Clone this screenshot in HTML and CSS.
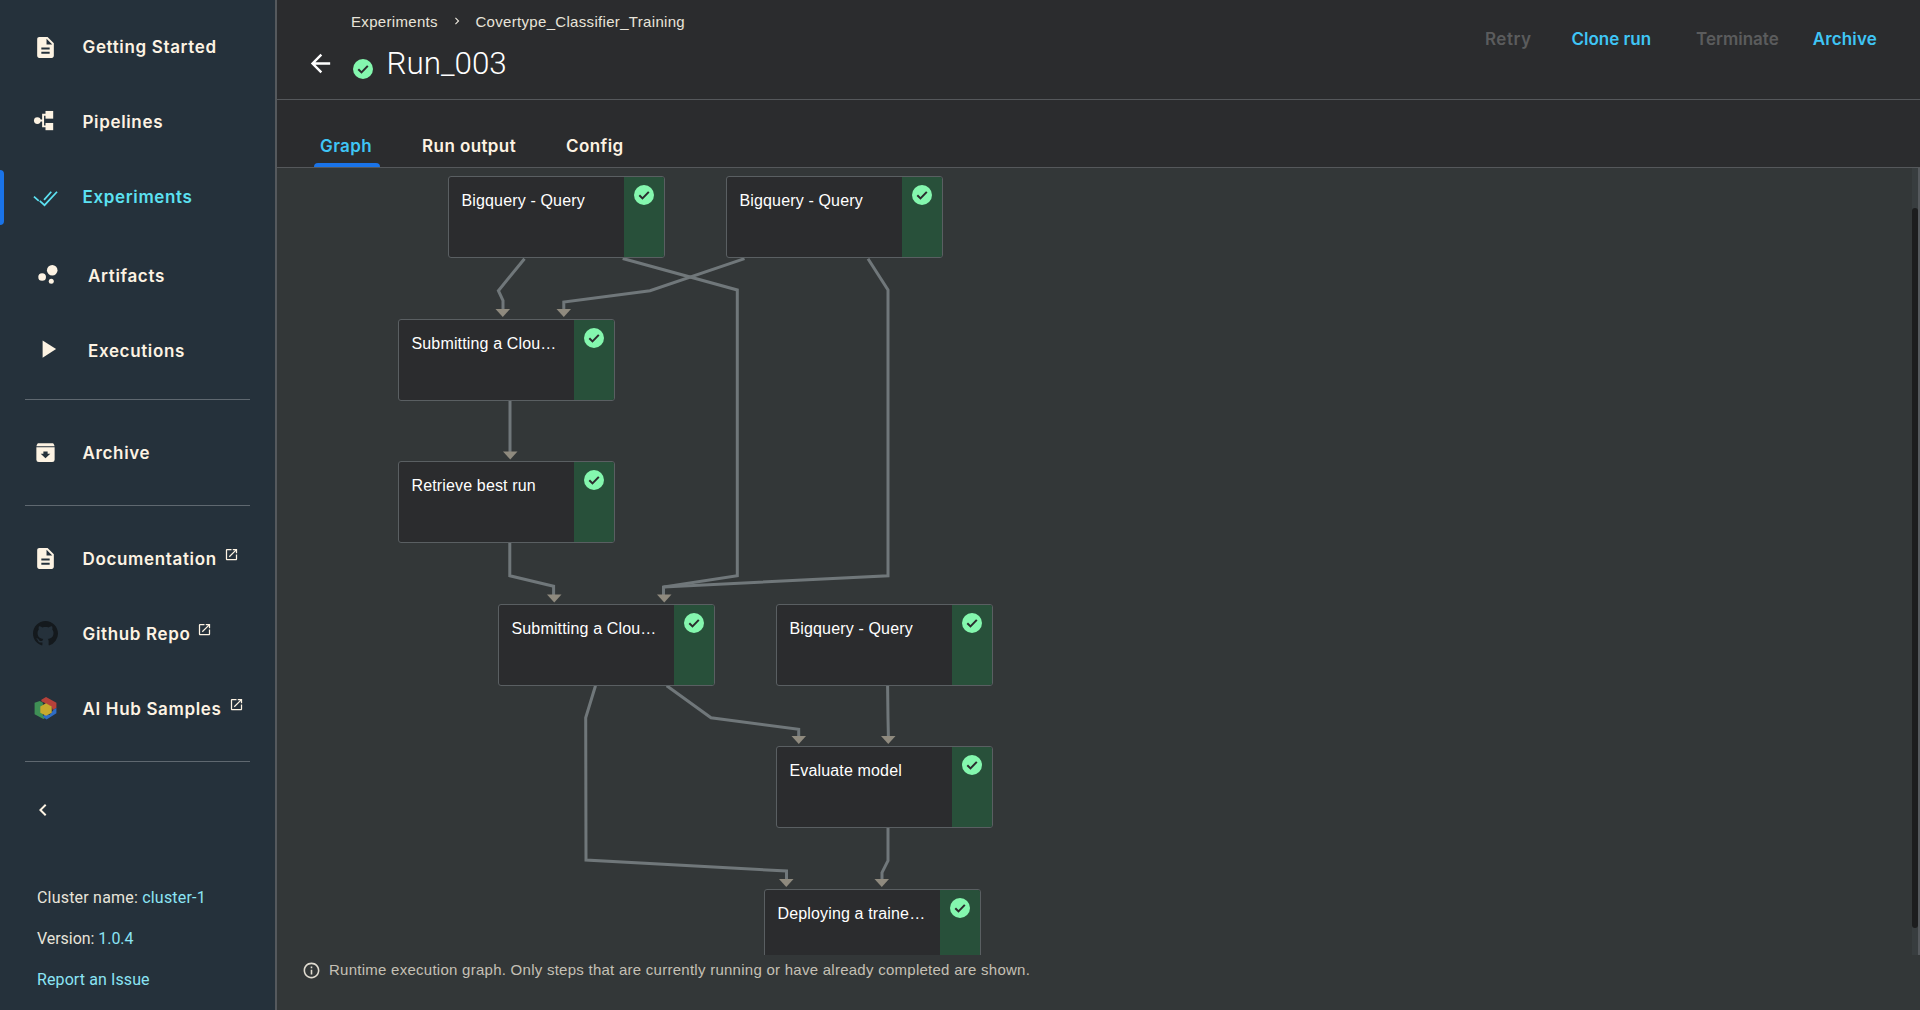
FILE: index.html
```html
<!DOCTYPE html>
<html lang="en">
<head>
  <meta charset="UTF-8" />
  <title>Run_003</title>
  <link rel="stylesheet" href="styles.css">
</head>
<body>

  <aside class="sidebar">
    <nav class="nav-group nav-group--top">
      <a class="nav-item">
        <svg class="nav-icon" viewBox="0 0 24 24"><path d="M14 2H6c-1.1 0-1.99.9-1.99 2L4 20c0 1.1.89 2 1.99 2H18c1.1 0 2-.9 2-2V8l-6-6zm2 16H8v-2h8v2zm0-4H8v-2h8v2zm-3-5V3.5L18.5 9H13z"/></svg>
        <span>Getting Started</span>
      </a>
      <a class="nav-item">
        <svg class="nav-icon" viewBox="1 2 26 26"><circle cx="5.5" cy="13" r="3.5"/><rect x="14" y="3" width="8" height="8"/><rect x="14" y="15.5" width="8" height="7.5"/><path d="M8 13h3.5M11.5 7h3M11.5 19h3M11.5 6v14" fill="none" stroke="#fdf3e3" stroke-width="2"/></svg>
        <span>Pipelines</span>
      </a>
      <a class="nav-item nav-item--active">
        <svg class="nav-icon nav-icon--done" viewBox="0 1 26 26"><path d="M1 13l5 4.5M7 17.5l5 4.5L25 8M11.5 16.5L19 8" fill="none" stroke="#5ce1f2" stroke-width="1.8"/></svg>
        <span>Experiments</span>
      </a>
      <a class="nav-item nav-item--wide nav-item--artifacts">
        <svg class="nav-icon" viewBox="-1 2 26 26"><circle cx="19" cy="8.5" r="5.5"/><circle cx="8.5" cy="15.5" r="4"/><circle cx="18" cy="20" r="2.6"/></svg>
        <span>Artifacts</span>
      </a>
      <a class="nav-item nav-item--wide">
        <svg class="nav-icon" viewBox="0 2.5 26 26"><path d="M10 4l14 9-14 9z"/></svg>
        <span>Executions</span>
      </a>
    </nav>
    <hr class="nav-rule nav-rule--first">
    <nav class="nav-group">
      <a class="nav-item">
        <svg class="nav-icon" viewBox="0 0 26 26"><path d="M6 3.5h14c1 0 1.5.5 1.8 1.2L22.500 6.500h-19l.7-1.800C4.500 4 5 3.500 6 3.500z"/><path fill-rule="evenodd" d="M3.500 7.500h19V20.500a2.500 2.500 0 0 1-2.500 2.500H6a2.500 2.500 0 0 1-2.500-2.500zM10.800 12v2.200H8l5 4.800 5-4.800h-2.800V12z"/></svg>
        <span>Archive</span>
      </a>
    </nav>
    <hr class="nav-rule">
    <nav class="nav-group">
      <a class="nav-item">
        <svg class="nav-icon" viewBox="0 0 24 24"><path d="M14 2H6c-1.100 0-1.990.9-1.990 2L4 20c0 1.100.89 2 1.990 2H18c1.100 0 2-.9 2-2V8l-6-6zm2 16H8v-2h8v2zm0-4H8v-2h8v2zm-3-5V3.500L18.500 9H13z"/></svg>
        <span>Documentation</span>
        <svg class="ext-icon" viewBox="0 0 24 24"><path d="M19 19H5V5h7V3H5c-1.110 0-2 .9-2 2v14c0 1.100.89 2 2 2h14c1.100 0 2-.9 2-2v-7h-2v7zM14 3v2h3.590l-9.830 9.830 1.410 1.410L19 6.410V10h2V3h-7z"/></svg>
      </a>
      <a class="nav-item">
        <svg class="nav-icon nav-icon--github" viewBox="0 0 16 16"><path d="M8 0C3.580 0 0 3.580 0 8c0 3.540 2.290 6.530 5.470 7.590.4.070.55-.17.55-.38 0-.19-.01-.82-.01-1.490-2.010.37-2.530-.49-2.690-.94-.09-.23-.48-.94-.82-1.130-.28-.15-.68-.52-.01-.53.63-.01 1.080.58 1.230.82.72 1.210 1.870.87 2.330.66.070-.52.28-.87.51-1.070-1.780-.2-3.640-.89-3.640-3.950 0-.87.31-1.590.82-2.150-.08-.2-.36-1.020.08-2.120 0 0 .67-.21 2.200.82.64-.18 1.320-.27 2-.27.68 0 1.360.09 2 .27 1.530-1.040 2.200-.82 2.200-.82.44 1.100.16 1.920.08 2.120.51.56.82 1.270.82 2.150 0 3.070-1.870 3.750-3.650 3.950.29.25.54.73.54 1.480 0 1.070-.01 1.930-.01 2.200 0 .21.15.46.55.38A8.013 8.013 0 0016 8c0-4.420-3.580-8-8-8z"/></svg>
        <span>Github Repo</span>
        <svg class="ext-icon" viewBox="0 0 24 24"><path d="M19 19H5V5h7V3H5c-1.110 0-2 .9-2 2v14c0 1.100.89 2 2 2h14c1.100 0 2-.9 2-2v-7h-2v7zM14 3v2h3.590l-9.830 9.830 1.410 1.410L19 6.410V10h2V3h-7z"/></svg>
      </a>
      <a class="nav-item">
        <svg class="nav-icon nav-icon--hub" viewBox="0 0 26 26">
          <path fill="#3f8f55" d="M2.500 7.500l5-1.800 3 1.800v12l2.500 2.500-2 1-8.500-4.500z"/>
          <path fill="#b5413a" d="M9 4.500l4.500-2.500 10 5.500v5l-3.500 2-1-3-7-4-3-1.500z"/>
          <path fill="#2e6cc4" d="M23.500 12.500v5l-9.500 6-3.500-2.500 1.500-2.500 5 .5 4-5z"/>
          <path fill="#c7a92e" d="M13.500 8l5.500 3v6l-5.500 3-5.500-3v-6z"/>
        </svg>
        <span>AI Hub Samples</span>
        <svg class="ext-icon" viewBox="0 0 24 24"><path d="M19 19H5V5h7V3H5c-1.110 0-2 .9-2 2v14c0 1.100.89 2 2 2h14c1.100 0 2-.9 2-2v-7h-2v7zM14 3v2h3.590l-9.830 9.830 1.410 1.410L19 6.410V10h2V3h-7z"/></svg>
      </a>
    </nav>
    <hr class="nav-rule">
    <button class="collapse-btn" aria-label="Collapse">
      <svg viewBox="0 0 24 24" width="24" height="24"><path d="M15.410 7.410L14 6l-6 6 6 6 1.410-1.410L10.830 12z"/></svg>
    </button>
    <div class="cluster-info">
      <div class="info-row info-row--cluster">Cluster name: <a>cluster-1</a></div>
      <div class="info-row info-row--version">Version: <a>1.0.4</a></div>
      <div class="info-row"><a>Report an Issue</a></div>
    </div>
  </aside>

  <main class="main">
    <header class="page-header">
      <div class="title-block">
        <div class="breadcrumbs">
          <a>Experiments</a>
          <svg class="crumb-sep" viewBox="0 0 24 24"><path d="M10 6L8.590 7.410 13.170 12l-4.580 4.590L10 18l6-6z"/></svg>
          <a>Covertype_Classifier_Training</a>
        </div>
        <div class="run-title">
          <svg class="back-icon" viewBox="0 0 24 24"><path d="M20 11H7.830l5.590-5.590L12 4l-8 8 8 8 1.410-1.410L7.830 13H20v-2z"/></svg>
          <svg class="status-icon status-icon--title" viewBox="0 0 20 20"><circle cx="10" cy="10" r="10"/><path d="M5.300 10.200l3.200 3.200 6.300-6.500"/></svg>
          <h1>Run_003</h1>
        </div>
      </div>
      <div class="actions">
        <button class="action action--retry" disabled>Retry</button>
        <button class="action action--clone">Clone run</button>
        <button class="action action--terminate" disabled>Terminate</button>
        <button class="action action--archive">Archive</button>
      </div>
    </header>

    <div class="tabs">
      <a class="tab tab--active">Graph</a>
      <a class="tab tab--output">Run output</a>
      <a class="tab tab--config">Config</a>
    </div>

    <section class="graph">
      <svg class="edges" viewBox="277 168 1643 787" width="1643" height="787">
        <g class="edge-lines">
          <polyline points="524.500,258.700 498.400,290.700 503,300.700 503,310"/>
          <polyline points="744.500,258.700 650,290.700 563.800,302 563.800,310"/>
          <polyline points="622.700,258.500 737.300,290 737.300,575.700 663.500,587 663.500,595"/>
          <polyline points="868,258.700 888,290 888,575.700 663.500,587"/>
          <polyline points="510,400 510,452"/>
          <polyline points="509.800,543 509.800,575.700 553.600,586.300 553.600,595"/>
          <polyline points="595.500,685.700 585.700,717.700 586,860 786.500,871 786.500,880"/>
          <polyline points="666.700,685.700 711,717.700 798.700,729.300 798.700,737"/>
          <polyline points="887.600,685.700 888,718 888.400,737"/>
          <polyline points="888,828 888,860.700 882,872.700 882,880"/>
        </g>
        <g class="edge-heads">
          <path d="M495.500 309h14.500l-7.250 8z"/>
          <path d="M556.500 309h14.500l-7.250 8z"/>
          <path d="M503 451.500h14.500l-7.250 8z"/>
          <path d="M547 594.500h14.500l-7.250 8z"/>
          <path d="M657 594.500h14.500l-7.250 8z"/>
          <path d="M791.500 736h14.500l-7.250 8z"/>
          <path d="M881 736h14.500l-7.250 8z"/>
          <path d="M779 879h14.500l-7.250 8z"/>
          <path d="M874.500 879h14.500l-7.250 8z"/>
        </g>
      </svg>

      <div class="node node--1"><span class="node-label">Bigquery - Query</span><div class="node-status"><svg class="status-icon" viewBox="0 0 20 20"><circle cx="10" cy="10" r="10"/><path d="M5.300 10.200l3.200 3.200 6.300-6.500"/></svg></div></div>
      <div class="node node--2"><span class="node-label">Bigquery - Query</span><div class="node-status"><svg class="status-icon" viewBox="0 0 20 20"><circle cx="10" cy="10" r="10"/><path d="M5.300 10.200l3.200 3.200 6.300-6.500"/></svg></div></div>
      <div class="node node--3"><span class="node-label">Submitting a Cloud ML training job</span><div class="node-status"><svg class="status-icon" viewBox="0 0 20 20"><circle cx="10" cy="10" r="10"/><path d="M5.300 10.200l3.200 3.200 6.300-6.500"/></svg></div></div>
      <div class="node node--4"><span class="node-label">Retrieve best run</span><div class="node-status"><svg class="status-icon" viewBox="0 0 20 20"><circle cx="10" cy="10" r="10"/><path d="M5.300 10.200l3.200 3.200 6.300-6.500"/></svg></div></div>
      <div class="node node--5"><span class="node-label">Submitting a Cloud ML training job</span><div class="node-status"><svg class="status-icon" viewBox="0 0 20 20"><circle cx="10" cy="10" r="10"/><path d="M5.300 10.200l3.200 3.200 6.300-6.500"/></svg></div></div>
      <div class="node node--6"><span class="node-label">Bigquery - Query</span><div class="node-status"><svg class="status-icon" viewBox="0 0 20 20"><circle cx="10" cy="10" r="10"/><path d="M5.300 10.200l3.200 3.200 6.300-6.500"/></svg></div></div>
      <div class="node node--7"><span class="node-label">Evaluate model</span><div class="node-status"><svg class="status-icon" viewBox="0 0 20 20"><circle cx="10" cy="10" r="10"/><path d="M5.300 10.200l3.200 3.200 6.300-6.500"/></svg></div></div>
      <div class="node node--8"><span class="node-label">Deploying a trained model</span><div class="node-status"><svg class="status-icon" viewBox="0 0 20 20"><circle cx="10" cy="10" r="10"/><path d="M5.300 10.200l3.200 3.200 6.300-6.500"/></svg></div></div>

      <div class="scrollbar"><div class="scrollbar-thumb"></div></div>
    </section>

    <footer class="graph-note">
      <svg class="note-icon" viewBox="0 0 24 24"><path d="M11 7h2v2h-2zm0 4h2v6h-2zm1-9C6.480 2 2 6.480 2 12s4.480 10 10 10 10-4.480 10-10S17.520 2 12 2zm0 18c-4.410 0-8-3.590-8-8s3.590-8 8-8 8 3.590 8 8-3.590 8-8 8z"/></svg>
      <span>Runtime execution graph. Only steps that are currently running or have already completed are shown.</span>
    </footer>
  </main>

</body>
</html>
```

FILE: styles.css
```css
:root {
  --side-bg: #25313b;
  --cream: #fdf3e3;
  --accent: #3fc5f5;
  --cyan: #5ce1f2;
  --link: #8be4f4;
  --top-bg: #2b2c2e;
  --graph-bg: #333738;
  --line: #55585b;
}

* {
  box-sizing: border-box;
}

html, body {
  height: 100%;
  margin: 0;
  overflow: hidden;
}

body {
  display: flex;
  width: 1920px;
  height: 1010px;
  background: var(--top-bg);
  color: var(--cream);
  font-family: 'Roboto', sans-serif;
}

/* Sidebar */
.sidebar {
  width: 277px;
  height: 1010px;
  flex-shrink: 0;
  display: flex;
  flex-direction: column;
  padding-top: 10px;
  background: var(--side-bg);
  border-right: 2px solid #55595d;
}

.nav-group {
  display: flex;
  flex-direction: column;
}

.nav-group--top .nav-item > span {
  margin-bottom: 2px;
}

.nav-item {
  position: relative;
  display: flex;
  align-items: center;
  height: 75px;
  padding-left: 33px;
  font-family: 'Inter', sans-serif;
  font-size: 17px;
  font-weight: 600;
  letter-spacing: 0.65px;
  color: var(--cream);
}

.nav-item > span {
  margin-left: 24.5px;
}

.nav-item--wide > span {
  margin-left: 30px;
}

.nav-item--artifacts {
  margin-top: 4px;
}

.nav-item--active {
  color: var(--cyan);
}

.nav-item--active::before {
  content: "";
  position: absolute;
  left: 0;
  top: 10px;
  width: 4px;
  height: 55px;
  background: #1a73e8;
  border-radius: 0 4px 4px 0;
}

.nav-icon {
  width: 25px;
  height: 25px;
  flex-shrink: 0;
  fill: var(--cream);
}

.nav-icon--github {
  fill: #14191d;
}

.nav-icon--hub {
  width: 27px;
  height: 27px;
  margin: 0 -1px;
}

.ext-icon {
  width: 15px;
  height: 15px;
  margin: 0 0 8px 7px;
  fill: var(--cream);
}

.nav-rule {
  width: 225px;
  height: 1px;
  margin: 15px 0 15px 25px;
  border: 0;
  background: #5f6870;
}

.nav-rule--first {
  margin-top: 10px;
}

.collapse-btn {
  width: 24px;
  height: 24px;
  margin: 21px 0 0 31px;
  padding: 0;
  border: 0;
  background: none;
  fill: var(--cream);
}

.cluster-info {
  margin-top: auto;
  padding: 0 0 10px 37px;
  font-size: 16px;
  letter-spacing: 0.1px;
  color: #e8e4da;
}

.info-row {
  height: 41px;
  line-height: 41px;
}

.info-row--cluster {
  letter-spacing: 0.2px;
}

.info-row--version {
  letter-spacing: -0.05px;
}

.info-row a {
  color: var(--link);
}

/* Main column */
.main {
  flex: 1;
  min-width: 0;
  display: flex;
  flex-direction: column;
}

.page-header {
  height: 100px;
  display: flex;
  justify-content: space-between;
  border-bottom: 1px solid var(--line);
}

.title-block {
  padding: 11px 0 0 74px;
}

.breadcrumbs {
  display: flex;
  align-items: center;
  height: 20px;
  font-family: 'Liberation Sans', sans-serif;
  font-size: 15px;
  letter-spacing: 0.32px;
  color: #e8e4da;
}

.crumb-sep {
  width: 14px;
  height: 14px;
  margin: 0 11px 0 12.500px;
  fill: #e8e4da;
}

.run-title {
  display: flex;
  align-items: center;
  margin: 14px 0 0 -45px;
}

.back-icon {
  width: 29px;
  height: 29px;
  fill: #fff;
}

.status-icon {
  width: 20px;
  height: 20px;
  fill: #84f7ae;
}

.status-icon path {
  fill: none;
  stroke: #2b2c2e;
  stroke-width: 2;
}

.status-icon--title {
  margin: 11px 0 0 18px;
}

.run-title h1 {
  margin: 0 0 0 13.500px;
  font-size: 31.4px;
  font-weight: 300;
  color: #fff;
}

.actions {
  display: flex;
  align-items: flex-start;
  padding: 29px 43px 0 0;
}

.action {
  padding: 0;
  border: 0;
  background: none;
  font-family: 'Inter', sans-serif;
  font-size: 17px;
  font-weight: 600;
  color: var(--accent);
}

.action:disabled {
  color: #5b5c5d;
}

.action--retry {
  letter-spacing: 0.5px;
}

.action--clone {
  margin-left: 40px;
}

.action--terminate {
  margin-left: 45px;
}

.action--archive {
  margin-left: 34px;
  letter-spacing: 0.15px;
}

.tabs {
  height: 68px;
  display: flex;
  align-items: flex-start;
  padding: 36px 0 0 43px;
  border-bottom: 1px solid var(--line);
}

.tab {
  position: relative;
  font-family: 'Inter', sans-serif;
  font-size: 17px;
  font-weight: 600;
  letter-spacing: 0.4px;
  color: var(--cream);
}

.tab--active {
  color: var(--accent);
}

.tab--active::after {
  content: "";
  position: absolute;
  left: -6px;
  right: -8px;
  top: 27px;
  height: 4px;
  background: #1a73e8;
  border-radius: 4px 4px 0 0;
}

.tab--output {
  margin-left: 50px;
}

.tab--config {
  margin-left: 50px;
}

/* Graph */
.graph {
  position: relative;
  height: 787px;
  overflow: hidden;
  background: var(--graph-bg);
  border-right: 2px solid #55595d;
}

.edges {
  position: absolute;
  left: 0;
  top: 0;
}

.edge-lines polyline {
  fill: none;
  stroke: #70777a;
  stroke-width: 3;
}

.edge-heads path {
  fill: #8f8a7e;
}

.node {
  position: absolute;
  width: 217px;
  height: 82px;
  display: flex;
  justify-content: space-between;
  overflow: hidden;
  background: var(--top-bg);
  border: 1px solid #5a5f62;
  border-radius: 3px;
}

.node-label {
  width: 163px;
  padding: 14px 0 0 12.500px;
  font-family: 'Liberation Sans', sans-serif;
  font-size: 16px;
  line-height: 20px;
  letter-spacing: 0.15px;
  color: #fff;
  white-space: nowrap;
  overflow: hidden;
  text-overflow: ellipsis;
}

.node-status {
  width: 40px;
  display: flex;
  justify-content: center;
  align-items: flex-start;
  padding-top: 8px;
  background: #28503a;
}

.node--1 { left: 171px; top: 8px; }
.node--2 { left: 449px; top: 8px; }
.node--3 { left: 121px; top: 151px; }
.node--4 { left: 121px; top: 293px; }
.node--5 { left: 221px; top: 436px; }
.node--6 { left: 499px; top: 436px; }
.node--7 { left: 499px; top: 578px; }
.node--8 { left: 487px; top: 721px; }

.scrollbar {
  position: absolute;
  right: 0;
  top: 0;
  bottom: 0;
  width: 6px;
  background: #383d3f;
}

.scrollbar-thumb {
  position: absolute;
  top: 40px;
  left: 0;
  width: 6px;
  height: 720px;
  background: #1c1d1e;
  border-radius: 3px;
}

/* Note under the graph */
.graph-note {
  flex: 1;
  display: flex;
  align-items: flex-start;
  padding: 6px 0 0 25px;
  background: var(--graph-bg);
  font-family: 'Liberation Sans', sans-serif;
  font-size: 15px;
  line-height: 18px;
  letter-spacing: 0.26px;
  color: #c5c0b5;
}

.note-icon {
  width: 19px;
  height: 19px;
  margin-right: 8px;
  fill: #e0dbd0;
}
```
